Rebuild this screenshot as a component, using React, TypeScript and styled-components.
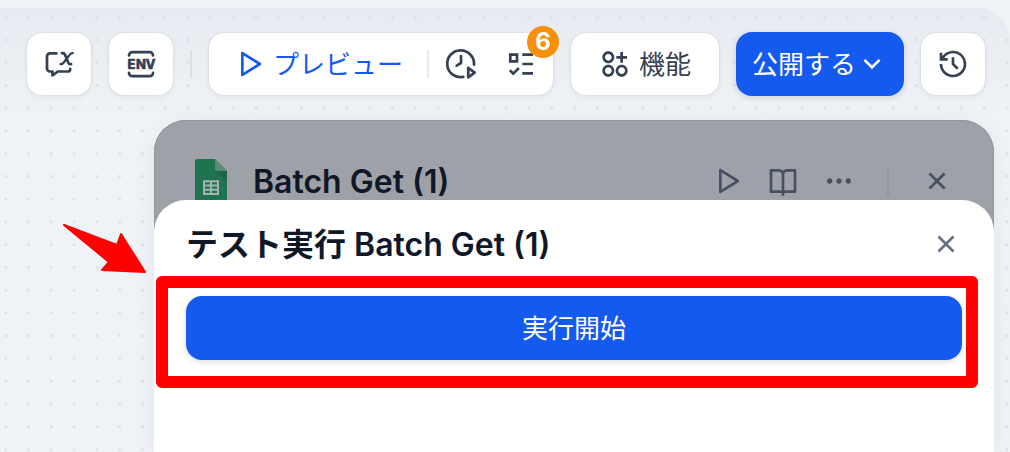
import React from "react";
import styled, { createGlobalStyle } from "styled-components";
import {
  RiApps2AddLine,
  RiArrowDownSLine,
  RiBookOpenLine,
  RiCloseLine,
  RiHistoryLine,
  RiMoreFill,
  RiPlayLargeLine,
} from "react-icons/ri";

const color = {
  page: "#f0f4f8",
  ink: "#354052",
  title: "#101828",
  muted: "#676f83",
  primary: "#155aef",
  line: "#dcdfe4",
  badge: "#f79009",
  dimmed: "#9fa1a9",
  mark: "#ff0000",
};

const GlobalStyle = createGlobalStyle`
  *, *::before, *::after { box-sizing: border-box; }
  html, body, #root { height: 100%; }
  body {
    margin: 0;
    overflow: hidden;
    background: ${color.page};
    color: ${color.ink};
    font-family: Inter, "Noto Sans CJK JP", sans-serif;
  }
  button { font: inherit; color: inherit; cursor: pointer; }
  svg { flex: none; display: block; }
`;

const Page = styled.div`
  height: 100%;
  padding-top: 8px;
  display: flex;
`;

const Canvas = styled.main`
  position: relative;
  flex: 1;
  min-width: 0;
  display: flex;
  flex-direction: column;
  gap: 24px;
  padding-top: 24px;
  overflow: hidden;
  border-top-right-radius: 32px;
  background: linear-gradient(#e7eaf0, #eff3f7 112px);
`;

const DotGrid = styled.svg`
  position: absolute;
  inset: 0;
  width: 100%;
  height: 100%;
`;

const Toolbar = styled.div`
  position: relative;
  display: flex;
  align-items: center;
  justify-content: flex-end;
  gap: 16px;
  padding: 0 24px;
`;

const ToolButton = styled.button<{ $square?: boolean }>`
  display: flex;
  align-items: center;
  justify-content: center;
  gap: 8px;
  height: 64px;
  width: ${(p) => (p.$square ? "66px" : "auto")};
  padding: ${(p) => (p.$square ? "0" : "0 28px")};
  border: 1px solid ${color.line};
  border-radius: 16px;
  background: #fff;
  box-shadow: 0 2px 4px rgba(16, 24, 40, 0.05);
`;

const PrimaryButton = styled(ToolButton)<{ $block?: boolean }>`
  width: ${(p) => (p.$block ? "100%" : "auto")};
  gap: 0;
  padding: 0 16px;
  border: 0;
  background: ${color.primary};
  color: #fff;
  box-shadow: 0 2px 6px rgba(16, 24, 40, 0.14);
`;

const Label = styled.span`
  padding-top: 2px;
  font-size: 26px;
  line-height: 32px;
  white-space: nowrap;
`;

const Divider = styled.span<{ $tone?: string }>`
  flex: none;
  width: 2px;
  height: 28px;
  background: ${(p) => p.$tone ?? color.line};
`;

const RunGroup = styled.div`
  position: relative;
  display: flex;
  align-items: center;
  height: 64px;
  padding-right: 2px;
  border: 1px solid ${color.line};
  border-radius: 16px;
  background: #fff;
  box-shadow: 0 2px 4px rgba(16, 24, 40, 0.05);
`;

const PreviewButton = styled.button`
  display: flex;
  align-items: center;
  gap: 8px;
  height: 100%;
  padding: 0 24px;
  border: 0;
  background: none;
  && { color: ${color.primary}; }
`;

const GroupIconButton = styled.button`
  display: flex;
  align-items: center;
  justify-content: center;
  width: 60px;
  height: 100%;
  padding: 0;
  border: 0;
  background: none;
`;

const GroupIcons = styled.div`
  display: flex;
  height: 100%;
  padding-left: 2px;
`;

const Badge = styled.span`
  position: absolute;
  top: -7px;
  right: -6px;
  display: flex;
  align-items: center;
  justify-content: center;
  width: 32px;
  height: 32px;
  border-radius: 50%;
  background: ${color.badge};
  color: #fff;
  font-size: 24px;
  font-weight: 700;
  line-height: 32px;
`;

const Panel = styled.section`
  position: relative;
  flex: 1;
  display: flex;
  flex-direction: column;
  margin: 0 16px 0 154px;
  border-radius: 32px 32px 0 0;
  background: ${color.dimmed};
  box-shadow: 0 4px 24px rgba(16, 24, 40, 0.06);
`;

const PanelHeader = styled.header`
  display: flex;
  align-items: center;
  gap: 26px;
  flex: none;
  height: 120px;
  padding: 0 40px;
  border: 1px solid #92959c;
  border-bottom: 0;
  border-radius: 32px 32px 0 0;
`;

const Heading = styled.h2`
  flex: 1;
  min-width: 0;
  margin: 0;
  padding-top: 2px;
  color: ${color.title};
  font-size: 32px;
  font-weight: 600;
  line-height: 38px;
  white-space: nowrap;
`;

const PanelActions = styled.div`
  display: flex;
  align-items: center;
  gap: 32px;
  color: #475061;
`;

const ActionSet = styled.div`
  display: flex;
  gap: 24px;
`;

const IconButton = styled.button`
  display: flex;
  padding: 0;
  border: 0;
  background: none;
`;

const Sheet = styled.section`
  position: relative;
  flex: 1;
  margin-top: -40px;
  border-radius: 32px 32px 0 0;
  background: #fff;
`;

const SheetHeader = styled.header`
  display: flex;
  align-items: center;
  padding: 24px 32px 12px;
  color: ${color.muted};
`;

const MarkedArea = styled.div`
  margin: 0 16px 0 2px;
  padding: 8px 4px 16px 18px;
  border: 12px solid ${color.mark};
  border-radius: 6px;
`;

const Pointer = styled.svg`
  position: absolute;
  top: 102px;
  left: -94px;
`;

const ICON = 32;

const stroke = {
  fill: "none",
  stroke: "currentColor",
  strokeWidth: 2.7,
  strokeLinecap: "round" as const,
  strokeLinejoin: "round" as const,
};

const BubbleXIcon = () => (
  <svg width={ICON} height={ICON} viewBox="0 0 32 32" {...stroke}>
    <path d="M13.4 5.4H7a3 3 0 0 0-3 3V20.500a3 3 0 0 0 3 3h2.500v4l5.300-4h9.800a2.600 2.600 0 0 0 2.600-2.600" />
    <path d="M19 5.200h.8q1.600 0 2.200 1.500l3.300 8q.6 1.500 2.200 1.500h.6" />
    <path d="M29.800 5.200h-.5q-1.400 0-2.300 1.200l-6.700 8.600q-1 1.200-2.300 1.200h-.5" strokeWidth="2.3" />
  </svg>
);

const EnvIcon = () => (
  <svg width={ICON} height={ICON} viewBox="0 0 32 32" {...stroke}>
    <path d="M4 7.500A3.300 3.300 0 0 1 7.300 4.200h17.400A3.300 3.300 0 0 1 28 7.500M4 24.900a3.300 3.300 0 0 0 3.300 3.300h17.400a3.300 3.300 0 0 0 3.300-3.300" />
    <text
      x="2.400 11 20.400"
      y="20.800"
      fill="currentColor"
      strokeWidth="0.500"
      fontFamily="Inter, sans-serif"
      fontSize="13"
      fontWeight="800"
    >
      ENV
    </text>
  </svg>
);

const ClockPlayIcon = () => (
  <svg width={ICON} height={ICON} viewBox="0 0 32 32" {...stroke}>
    <path d="M18.300 28.900A13.400 13.400 0 1 1 29 16.600" />
    <path d="M16 8v7l-4.300 2.700" />
    <path d="M23.200 19.900v9.400l6.500-4.700z" />
  </svg>
);

const ChecklistIcon = () => (
  <svg
    width={ICON}
    height={ICON}
    viewBox="0 0 32 32"
    fill="none"
    stroke="currentColor"
    strokeWidth="2.700"
  >
    <path d="M5.300 6.700H12v6.700H5.300zM17.300 6.700h10.700M17.300 16h10.700M17.300 25.300h10.700M4.900 22.300l3.300 3.300 5.700-5.600" />
  </svg>
);

const SpreadsheetIcon = () => (
  <svg width="32" height="44" viewBox="0 0 32 44">
    <path d="M2 0h18l12 12v30a2 2 0 0 1-2 2H2a2 2 0 0 1-2-2V2a2 2 0 0 1 2-2z" fill="#207351" />
    <path d="M20 12h12v10z" fill="#1b6547" />
    <path d="M20 0l12 12H22a2 2 0 0 1-2-2z" fill="#5c8c78" />
    <path
      d="M9 22.300h14v12.700H9zM16 22.300v12.700M9 26.500h14M9 30.800h14"
      fill="none"
      stroke="#a5b3b0"
      strokeWidth="2"
    />
  </svg>
);

export default function App() {
  return (
    <>
      <GlobalStyle />
      <Page>
        <Canvas>
          <DotGrid aria-hidden="true">
            <defs>
              <pattern
                id="dots"
                x="-5.600"
                y="-2.300"
                width="22.750"
                height="22.750"
                patternUnits="userSpaceOnUse"
              >
                <circle cx="11.400" cy="11.400" r="1.600" fill="#dcdfea" />
              </pattern>
            </defs>
            <rect width="100%" height="100%" fill="url(#dots)" />
          </DotGrid>

          <Toolbar>
            <ToolButton $square aria-label="会話変数">
              <BubbleXIcon />
            </ToolButton>
            <ToolButton $square aria-label="環境変数">
              <EnvIcon />
            </ToolButton>
            <Divider />
            <RunGroup>
              <PreviewButton>
                <RiPlayLargeLine size={ICON} />
                <Label>プレビュー</Label>
              </PreviewButton>
              <Divider $tone="#e9ebef" />
              <GroupIcons>
                <GroupIconButton aria-label="実行履歴">
                  <ClockPlayIcon />
                </GroupIconButton>
                <GroupIconButton aria-label="チェックリスト">
                  <ChecklistIcon />
                </GroupIconButton>
              </GroupIcons>
              <Badge>6</Badge>
            </RunGroup>
            <ToolButton>
              <RiApps2AddLine size={ICON} />
              <Label>機能</Label>
            </ToolButton>
            <PrimaryButton>
              <Label>公開する</Label>
              <RiArrowDownSLine size={ICON} />
            </PrimaryButton>
            <ToolButton $square aria-label="バージョン履歴">
              <RiHistoryLine size={ICON} />
            </ToolButton>
          </Toolbar>

          <Panel>
            <PanelHeader>
              <SpreadsheetIcon />
              <Heading>Batch Get (1)</Heading>
              <PanelActions>
                <ActionSet>
                  <IconButton aria-label="実行">
                    <RiPlayLargeLine size={ICON} />
                  </IconButton>
                  <IconButton aria-label="ドキュメント">
                    <RiBookOpenLine size={ICON} />
                  </IconButton>
                  <IconButton aria-label="その他">
                    <RiMoreFill size={ICON} />
                  </IconButton>
                </ActionSet>
                <Divider $tone="#92959d" />
                <IconButton aria-label="閉じる">
                  <RiCloseLine size={ICON} />
                </IconButton>
              </PanelActions>
            </PanelHeader>

            <Sheet>
              <SheetHeader>
                <Heading>テスト実行 Batch Get (1)</Heading>
                <IconButton aria-label="テスト実行を閉じる">
                  <RiCloseLine size={ICON} />
                </IconButton>
              </SheetHeader>
              <MarkedArea>
                <PrimaryButton $block>
                  <Label>実行開始</Label>
                </PrimaryButton>
              </MarkedArea>
            </Sheet>

            <Pointer width="88" height="54" viewBox="0 0 88 54" aria-hidden="true">
              <path
                d="M4 3l53 20 4-11L85 50l-43-2 7-8z"
                fill={color.mark}
                stroke={color.mark}
                strokeWidth="2"
                strokeLinejoin="round"
              />
            </Pointer>
          </Panel>
        </Canvas>
      </Page>
    </>
  );
}
